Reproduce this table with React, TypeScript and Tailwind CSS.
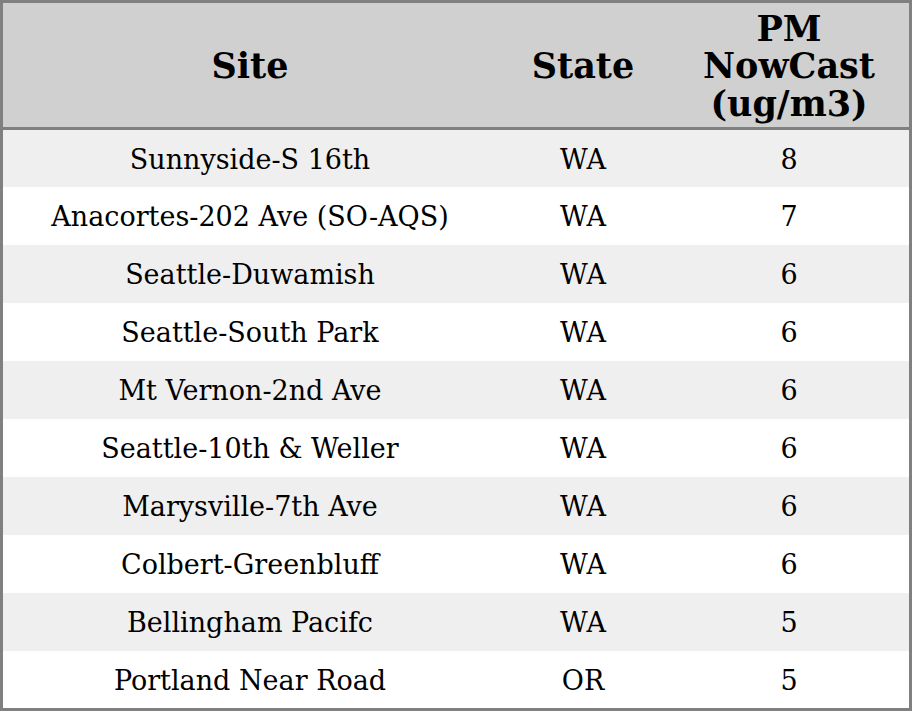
import React from "react";

const rows: [string, string, string][] = [
  ["Sunnyside-S 16th", "WA", "8"],
  ["Anacortes-202 Ave (SO-AQS)", "WA", "7"],
  ["Seattle-Duwamish", "WA", "6"],
  ["Seattle-South Park", "WA", "6"],
  ["Mt Vernon-2nd Ave", "WA", "6"],
  ["Seattle-10th & Weller", "WA", "6"],
  ["Marysville-7th Ave", "WA", "6"],
  ["Colbert-Greenbluff", "WA", "6"],
  ["Bellingham Pacifc", "WA", "5"],
  ["Portland Near Road", "OR", "5"],
];

export default function App() {
  return (
    <div className="w-[912px] h-[711px] bg-white" style={{ fontFamily: '"DejaVu Serif", serif' }}>
      <div className="w-[912px] h-[711px] border-[3px] border-[#808080] flex flex-col text-black">
        <div className="grid grid-cols-[494px_172px_240px] h-[127px] pt-[2px] bg-[#d0d0d0] border-b-[3px] border-[#808080] items-center text-center font-bold text-[35px] leading-[37.5px]">
          <div>Site</div>
          <div>State</div>
          <div>PM<br />NowCast<br />(ug/m3)</div>
        </div>
        {rows.map((r, i) => (
          <div
            key={i}
            className={`grid grid-cols-[494px_172px_240px] pt-[3px] items-center text-center text-[27px] ${i === 0 ? "h-[57px]" : i === rows.length - 1 ? "flex-1" : "h-[58px]"} ${i % 2 === 0 ? "bg-[#efefef]" : "bg-white"}`}
          >
            <div>{r[0]}</div>
            <div>{r[1]}</div>
            <div>{r[2]}</div>
          </div>
        ))}
      </div>
    </div>
  );
}
